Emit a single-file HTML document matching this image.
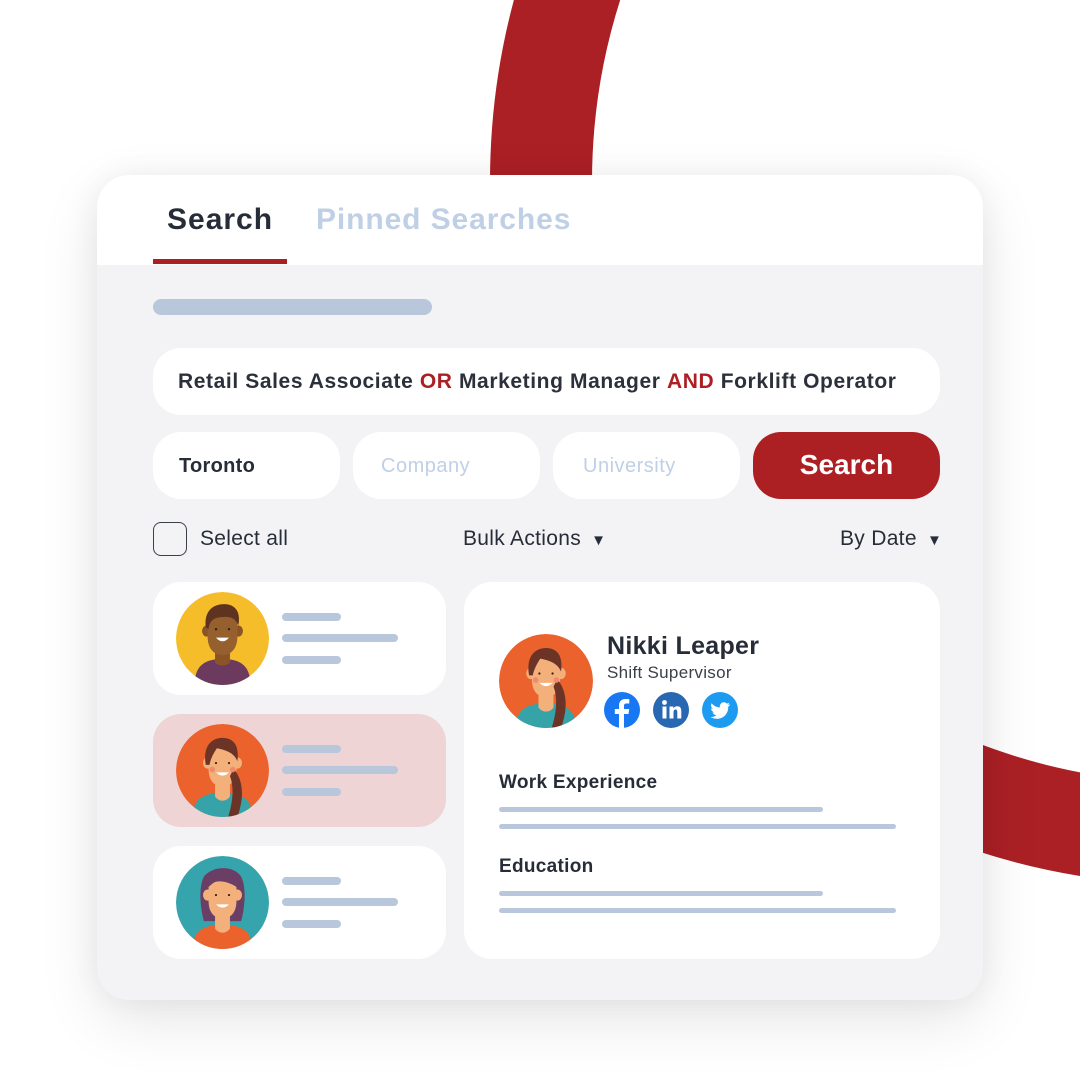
<!DOCTYPE html>
<html><head><meta charset="utf-8">
<style>
*{margin:0;padding:0;box-sizing:border-box}
body{width:1080px;height:1080px;background:#fff;position:relative;overflow:hidden;font-family:"Liberation Sans",sans-serif;color:#272d38}
.abs{position:absolute}
.card{left:97px;top:175px;width:886px;height:825px;border-radius:32px;background:#f3f3f5;overflow:hidden;box-shadow:0 20px 60px rgba(0,0,0,0.10),0 0 30px rgba(0,0,0,0.05)}
.hdr{left:0;top:0;width:886px;height:90px;background:#fff}
.pill{background:#fff;border-radius:24px}
.bar{background:#b8c7dc;border-radius:4px}
.med{font-weight:bold}
</style></head><body>
<svg class="abs" style="left:0;top:0" width="1080" height="1080">
<circle cx="1193" cy="182" r="652" fill="none" stroke="#ab2025" stroke-width="102"/>
</svg>
<div class="abs card">
  <div class="abs hdr"></div>
  <div class="abs med" style="left:70px;top:28px;font-size:30px;color:#272d38;letter-spacing:1px">Search</div>
  <div class="abs" style="left:56px;top:84px;width:134px;height:5px;background:#ac2024"></div>
  <div class="abs med" style="left:219px;top:28px;font-size:30px;color:#bfd0e6;letter-spacing:0.9px">Pinned Searches</div>
  <div class="abs bar" style="left:56px;top:124px;width:279px;height:16px;border-radius:8px"></div>
  <div class="abs pill" style="left:56px;top:173px;width:787px;height:67px;border-radius:28px"></div>
  <div class="abs med" style="left:81px;top:195px;font-size:21px;letter-spacing:0.6px;white-space:nowrap;color:#2b303a;font-weight:600">Retail Sales Associate <span style="color:#ac2024;font-weight:bold">OR</span> Marketing Manager <span style="color:#ac2024;font-weight:bold">AND</span> Forklift Operator</div>
  <div class="abs pill" style="left:56px;top:257px;width:187px;height:67px;border-radius:28px"></div>
  <div class="abs med" style="left:82px;top:280px;font-size:20px;color:#272d38;letter-spacing:0.3px">Toronto</div>
  <div class="abs pill" style="left:256px;top:257px;width:187px;height:67px;border-radius:28px"></div>
  <div class="abs" style="left:284px;top:280px;font-size:20px;color:#bfd0e6;letter-spacing:0.5px">Company</div>
  <div class="abs pill" style="left:456px;top:257px;width:187px;height:67px;border-radius:28px"></div>
  <div class="abs" style="left:486px;top:280px;font-size:20px;color:#bfd0e6;letter-spacing:0.5px">University</div>
  <div class="abs" style="left:656px;top:257px;width:187px;height:67px;border-radius:28px;background:#ac2024"></div>
  <div class="abs med" style="left:656px;top:274px;width:187px;text-align:center;font-size:28px;color:#fff">Search</div>
  <div class="abs" style="left:56px;top:347px;width:34px;height:34px;border:1.5px solid #3a3f48;border-radius:8px"></div>
  <div class="abs" style="left:103px;top:352px;font-size:21px;color:#272d38;letter-spacing:0.3px">Select all</div>
  <div class="abs" style="left:366px;top:352px;font-size:21px;color:#272d38;letter-spacing:0.3px">Bulk Actions <span style="font-size:15px;margin-left:4px">&#9660;</span></div>
  <div class="abs" style="left:743px;top:352px;font-size:21px;color:#272d38;letter-spacing:0.3px">By Date <span style="font-size:15px;margin-left:4px">&#9660;</span></div>

  <div class="abs pill" style="left:56px;top:407px;width:293px;height:113px;border-radius:28px"></div>
  <div class="abs" style="left:56px;top:539px;width:293px;height:113px;border-radius:28px;background:#eed4d5"></div>
  <div class="abs pill" style="left:56px;top:671px;width:293px;height:113px;border-radius:28px"></div>
  <div class="abs" style="left:367px;top:407px;width:476px;height:377px;border-radius:28px;background:#fff"></div>

  <div class="abs bar" style="left:185px;top:438px;width:59px;height:8px"></div>
  <div class="abs bar" style="left:185px;top:459px;width:116px;height:8px"></div>
  <div class="abs bar" style="left:185px;top:481px;width:59px;height:8px"></div>
  <div class="abs bar" style="left:185px;top:570px;width:59px;height:8px"></div>
  <div class="abs bar" style="left:185px;top:591px;width:116px;height:8px"></div>
  <div class="abs bar" style="left:185px;top:613px;width:59px;height:8px"></div>
  <div class="abs bar" style="left:185px;top:702px;width:59px;height:8px"></div>
  <div class="abs bar" style="left:185px;top:723px;width:116px;height:8px"></div>
  <div class="abs bar" style="left:185px;top:745px;width:59px;height:8px"></div>

  <svg class="abs" style="left:79px;top:417px" width="93" height="93" viewBox="0 0 100 100">
    <defs><clipPath id="c1"><circle cx="50" cy="50" r="50"/></clipPath></defs>
    <g clip-path="url(#c1)">
    <circle cx="50" cy="50" r="50" fill="#f6bd2b"/>
    <path d="M20 100 C20 78 32 72 50 72 C68 72 80 78 80 100Z" fill="#6b3a5e"/>
    <path d="M42 58 L58 58 L58 76 C54 80 46 80 42 76Z" fill="#8a5426"/>
    <ellipse cx="33" cy="42" rx="5" ry="6" fill="#8a5426"/><ellipse cx="67" cy="42" rx="5" ry="6" fill="#8a5426"/>
    <path d="M34 30 C34 22 66 22 66 30 L66 48 C66 62 58 68 50 68 C42 68 34 62 34 48Z" fill="#95602e"/>
    <path d="M32 38 C30 20 40 13 52 13 C64 13 70 22 67 36 C64 28 58 26 50 27 C42 27 36 30 35 40Z" fill="#5e3320"/>
    <path d="M43 49 Q50 57 57 49Z" fill="#fff"/>
    <circle cx="43" cy="40" r="1.3" fill="#3a1f10"/><circle cx="57" cy="40" r="1.3" fill="#3a1f10"/>
    </g>
  </svg>
  <svg class="abs" style="left:79px;top:549px" width="93" height="93" viewBox="0 0 100 100">
    <defs><clipPath id="c2"><circle cx="50" cy="50" r="50"/></clipPath></defs>
    <g clip-path="url(#c2)">
    <circle cx="50" cy="50" r="50" fill="#ec622d"/>
    <path d="M18 100 C18 80 30 74 50 74 C70 74 82 80 82 100Z" fill="#36a3a8"/>
    <path d="M42 60 L58 60 L58 78 C54 84 46 84 42 78Z" fill="#f4b07a"/>
    <ellipse cx="34" cy="42" rx="5" ry="6" fill="#f4b07a"/><ellipse cx="66" cy="42" rx="5" ry="6" fill="#f4b07a"/>
    <path d="M35 32 C35 24 65 24 65 32 L65 48 C65 62 58 67 50 67 C42 67 35 62 35 48Z" fill="#f4b07a"/>
    <path d="M32 44 C28 20 42 14 52 15 C64 16 68 26 66 40 C62 30 52 28 44 26 C40 32 37 38 36 44Z" fill="#6b3426"/>
    <path d="M62 48 C72 60 74 78 66 100 L56 100 C62 82 62 66 58 56Z" fill="#6b3426"/>
    <circle cx="39" cy="49" r="3" fill="#ef8a6a"/><circle cx="61" cy="49" r="3" fill="#ef8a6a"/>
    <path d="M43 52 Q50 59 57 52Z" fill="#fff"/>
    <circle cx="43" cy="42" r="1.2" fill="#3a1f10"/><circle cx="57" cy="42" r="1.2" fill="#3a1f10"/>
    </g>
  </svg>
  <svg class="abs" style="left:79px;top:681px" width="93" height="93" viewBox="0 0 100 100">
    <defs><clipPath id="c3"><circle cx="50" cy="50" r="50"/></clipPath></defs>
    <g clip-path="url(#c3)">
    <circle cx="50" cy="50" r="50" fill="#36a4ac"/>
    <path d="M30 22 C40 10 62 10 70 22 C76 34 74 56 70 70 L30 70 C26 56 24 34 30 22Z" fill="#6b3f65"/>
    <path d="M18 100 C18 80 30 74 50 74 C70 74 82 80 82 100Z" fill="#ec622d"/>
    <path d="M42 60 L58 60 L58 78 C54 84 46 84 42 78Z" fill="#f4b07a"/>
    <ellipse cx="34" cy="42" rx="5" ry="6" fill="#f4b07a"/><ellipse cx="66" cy="42" rx="5" ry="6" fill="#f4b07a"/>
    <path d="M35 32 C35 24 65 24 65 32 L65 48 C65 62 58 67 50 67 C42 67 35 62 35 48Z" fill="#f4b07a"/>
    <path d="M34 34 C36 20 64 20 66 34 C58 28 48 26 42 28 C38 30 36 33 34 34Z" fill="#6b3f65"/>
    <path d="M43 52 Q50 59 57 52Z" fill="#fff"/>
    <circle cx="43" cy="42" r="1.2" fill="#3a1f10"/><circle cx="57" cy="42" r="1.2" fill="#3a1f10"/>
    </g>
  </svg>

  <svg class="abs" style="left:402px;top:459px" width="94" height="94" viewBox="0 0 100 100">
    <defs><clipPath id="c4"><circle cx="50" cy="50" r="50"/></clipPath></defs>
    <g clip-path="url(#c4)">
    <circle cx="50" cy="50" r="50" fill="#ec622d"/>
    <path d="M18 100 C18 80 30 74 50 74 C70 74 82 80 82 100Z" fill="#36a3a8"/>
    <path d="M42 60 L58 60 L58 78 C54 84 46 84 42 78Z" fill="#f4b07a"/>
    <ellipse cx="34" cy="42" rx="5" ry="6" fill="#f4b07a"/><ellipse cx="66" cy="42" rx="5" ry="6" fill="#f4b07a"/>
    <path d="M35 32 C35 24 65 24 65 32 L65 48 C65 62 58 67 50 67 C42 67 35 62 35 48Z" fill="#f4b07a"/>
    <path d="M32 44 C28 20 42 14 52 15 C64 16 68 26 66 40 C62 30 52 28 44 26 C40 32 37 38 36 44Z" fill="#6b3426"/>
    <path d="M62 48 C72 60 74 78 66 100 L56 100 C62 82 62 66 58 56Z" fill="#6b3426"/>
    <circle cx="39" cy="49" r="3" fill="#ef8a6a"/><circle cx="61" cy="49" r="3" fill="#ef8a6a"/>
    <path d="M43 52 Q50 59 57 52Z" fill="#fff"/>
    <circle cx="43" cy="42" r="1.2" fill="#3a1f10"/><circle cx="57" cy="42" r="1.2" fill="#3a1f10"/>
    </g>
  </svg>
  <div class="abs med" style="left:510px;top:457px;font-size:25px;color:#272d38;letter-spacing:0.3px">Nikki Leaper</div>
  <div class="abs" style="left:510px;top:488px;font-size:17px;color:#3a3f48;letter-spacing:0.3px">Shift Supervisor</div>
  <svg class="abs" style="left:507px;top:517px" width="36" height="36" viewBox="0 0 36 36"><circle cx="18" cy="18" r="18" fill="#1877f2"/><path d="M20 36 V22 H24.5 L25.2 17 H20 V14 C20 12.5 20.5 11.5 22.6 11.5 H25.3 V7.2 C24.8 7.1 23.2 7 21.5 7 C17.6 7 15 9.3 15 13.6 V17 H10.8 V22 H15 V36Z" fill="#fff"/></svg>
  <svg class="abs" style="left:556px;top:517px" width="36" height="36" viewBox="0 0 36 36"><circle cx="18" cy="18" r="18" fill="#2867b2"/><rect x="9.5" y="14.5" width="4" height="12" fill="#fff"/><circle cx="11.5" cy="10.5" r="2.4" fill="#fff"/><path d="M16.5 14.5 H20.3 V16.3 C21 15 22.5 14.2 24.3 14.2 C27.3 14.2 28.3 16.2 28.3 19.3 V26.5 H24.3 V20 C24.3 18.5 23.8 17.5 22.5 17.5 C21.2 17.5 20.5 18.5 20.5 20 V26.5 H16.5Z" fill="#fff"/></svg>
  <svg class="abs" style="left:605px;top:517px" width="36" height="36" viewBox="0 0 36 36"><circle cx="18" cy="18" r="18" fill="#1d9bf0"/><path d="M28 12.2 C27.3 12.5 26.5 12.7 25.7 12.8 C26.5 12.3 27.1 11.5 27.4 10.6 C26.6 11.1 25.8 11.4 24.9 11.6 C23.3 9.9 20.6 9.9 19 11.5 C18 12.5 17.6 14 17.900 15.4 C14.6 15.2 11.6 13.7 9.6 11.2 C8.5 13.1 9.1 15.5 10.9 16.7 C10.3 16.7 9.7 16.5 9.1 16.2 C9.1 18.2 10.5 19.9 12.4 20.3 C11.8 20.5 11.2 20.5 10.6 20.4 C11.1 22.1 12.7 23.2 14.5 23.3 C12.8 24.6 10.7 25.2 8.6 25 C10.5 26.2 12.7 26.8 14.9 26.8 C22.3 26.8 26.3 20.6 26.2 15.2 L26.2 14.7 C27 14.1 27.6 13.3 28 12.2Z" fill="#fff"/></svg>
  <div class="abs" style="left:402px;top:597px;font-size:19px;color:#272d38;font-weight:600;letter-spacing:0.3px">Work Experience</div>
  <div class="abs bar" style="left:402px;top:632px;width:324px;height:5px"></div>
  <div class="abs bar" style="left:402px;top:649px;width:397px;height:5px"></div>
  <div class="abs" style="left:402px;top:681px;font-size:19px;color:#272d38;font-weight:600;letter-spacing:0.3px">Education</div>
  <div class="abs bar" style="left:402px;top:716px;width:324px;height:5px"></div>
  <div class="abs bar" style="left:402px;top:733px;width:397px;height:5px"></div>
</div>
</body></html>
